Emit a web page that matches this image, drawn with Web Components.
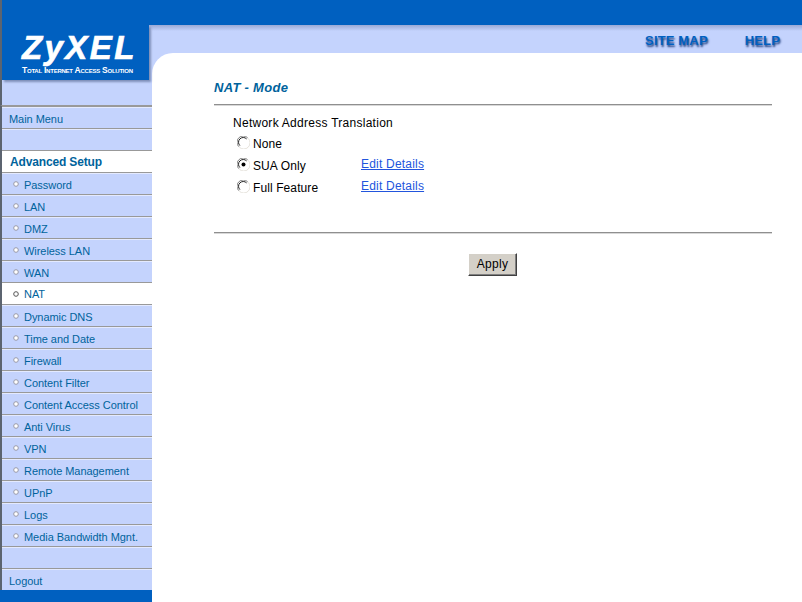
<!DOCTYPE html>
<html>
<head>
<title>NAT - Mode</title>
<style>
  html, body { margin: 0; padding: 0; height: 100%; overflow: hidden; background: #fff; }
  body { font-family: "Liberation Sans", Arial, sans-serif; }
</style>
</head>
<body>

<template id="zx-logo">
  <style>
    :host {
      display: block; height: 83px; position: relative;
      background: linear-gradient(#0060c0 25px, #9aa9d6 25px, #c4d3fd 30px);
      border-left: 2px solid #5c6470; box-sizing: border-box;
    }
    /* the drop shadow starts under the top bar */
    #shade { position: absolute; left: 0; top: 25px; height: 55px; width: 147px; box-shadow: 2px 2px 2px #7f8fb8; }
    #box {
      position: relative; height: 80px; width: 147px; box-sizing: border-box;
      background: #0060c0; color: #fff; padding: 32px 0 0 20px;
    }
    #name {
      font: italic bold 33px/32px "Liberation Sans", sans-serif; letter-spacing: 2.4px; height: 32px;
      -webkit-text-stroke: .7px #fff;
    }
    #slogan {
      font: bold 8.5px/10px "Liberation Sans", sans-serif; font-variant: small-caps;
      white-space: nowrap; margin-top: 1px; letter-spacing: -.24px;
    }
  </style>
  <div id="shade"></div>
  <div id="box">
    <div id="name">ZyXEL</div>
    <div id="slogan">Total Internet Access Solution</div>
  </div>
</template>

<template id="zx-nav-item">
  <style>
    :host {
      display: flex; align-items: center; box-sizing: border-box; height: 22px;
      border-top: 1px solid #999; box-shadow: inset 0 1px 0 #e4eaff;
      background: #c4d3fd; color: #00639c;
      font: 11px "Liberation Sans", sans-serif; padding: 2px 0 0 7px; white-space: nowrap;
      letter-spacing: -.05px;
    }
    :host([active]) { background: #fff; box-shadow: none; padding-top: 0; }
    :host([heading]) { font-weight: bold; font-size: 12px; padding-left: 8px; letter-spacing: -.15px; }
    :host([sub]) { padding-left: 11px; }
    svg { display: none; width: 6px; height: 6px; margin-right: 5px; position: relative; top: -1px; }
    :host([sub]) svg { display: block; }
    :host([active]) svg { top: 0; }
    circle { fill: #fff; stroke: #9a9aa8; }
    :host([active]) circle { stroke: #555; }
  </style>
  <svg viewBox="0 0 6 6"><circle cx="3" cy="3" r="2.3"/></svg>
  <slot></slot>
</template>

<template id="zx-sidebar">
  <style>
    :host {
      display: flex; flex-direction: column; width: 152px; flex: none;
      background: #c4d3fd; position: relative; z-index: 1;
    }
    #spacer { height: 23px; box-sizing: border-box; border-left: 2px solid #5c6470; border-bottom: 1px solid #999; }
    #list { border-left: 2px solid #5c6470; }
    #foot { flex: 1; background: #0060c0; }
  </style>
  <zx-logo></zx-logo>
  <div id="spacer"></div>
  <div id="list"><slot></slot></div>
  <div id="foot"></div>
</template>

<template id="zx-topbar">
  <style>
    :host { display: block; background: #0060c0; padding-top: 25px; }
    #band {
      height: 28px; box-sizing: border-box; padding: 9px 22px 0 0;
      background: linear-gradient(#9aa9d6, #c4d3fd 6px);
      display: flex; justify-content: flex-end; gap: 37px;
    }
    ::slotted(span) {
      font: bold 13px/14px "Liberation Sans", sans-serif; color: #0060c0;
      letter-spacing: .15px;
      text-shadow: 1px 2px 2px #1f3f7f;
    }
  </style>
  <div id="band"><slot></slot></div>
</template>

<template id="zx-radio">
  <style>
    :host {
      display: flex; align-items: center; height: 22px; gap: 3px; margin-left: 4px;
      font: 12px "Liberation Sans", sans-serif; color: #000; letter-spacing: .1px;
    }
    svg { width: 13px; height: 13px; flex: none; position: relative; top: -2px; }
    #dot { display: none; }
    :host([checked]) #dot { display: block; }
    #label { width: 105px; }
    ::slotted(a) { color: #2255dd; font-size: 12px; letter-spacing: .2px; position: relative; top: -2px; }
  </style>
  <svg viewBox="0 0 13 13">
    <circle cx="6.5" cy="6.5" r="6" fill="#fff"/>
    <path d="M1.8 10.7A6 6 0 0 1 10.7 1.8" fill="none" stroke="#808080"/>
    <path d="M2.9 9.6A4.6 4.6 0 0 1 9.6 2.9" fill="none" stroke="#222"/>
    <path d="M11.2 2.3A6 6 0 0 1 2.3 11.2" fill="none" stroke="#e4e1da"/>
    <circle id="dot" cx="6.5" cy="6.5" r="2" fill="#000"/>
  </svg>
  <span id="label"></span>
  <slot></slot>
</template>

<template id="zx-button">
  <style>
    :host {
      display: inline-block; box-sizing: border-box; width: 49px; height: 23px;
      background: #d4d0c8; color: #000; font: 12px/21px "Liberation Sans", sans-serif; text-align: center;
      letter-spacing: .3px;
      border: 1px solid; border-color: #fff #404040 #404040 #fff;
      box-shadow: inset -1px -1px 0 #808080;
    }
  </style>
  <slot></slot>
</template>

<template id="zx-content">
  <style>
    :host { display: block; flex: 1; background: #c4d3fd; }
    #panel {
      background: #fff; border-top-left-radius: 21px; height: 100%; box-sizing: border-box;
      padding: 27px 30px 0 62px;
    }
    h1 { margin: 0; height: 24px; font: italic bold 13px/15px "Liberation Sans", sans-serif; color: #00639c; letter-spacing: .3px; }
    hr { margin: 0; height: 2px; border: 0; background: linear-gradient(#8f8f8f 1px, #d8d8d8 1px); }
    #form { padding: 10px 0 0 19px; height: 126px; box-sizing: border-box; font: 12px "Liberation Sans", sans-serif; color: #000; }
    #title { height: 14px; line-height: 14px; letter-spacing: .27px; }
    #opts { margin-top: 3px; }
    #actions { display: flex; justify-content: center; padding-top: 19px; padding-right: 1px; }
  </style>
  <div id="panel">
    <h1><slot name="heading"></slot></h1>
    <hr>
    <div id="form"><div id="title"><slot name="title"></slot></div><div id="opts"><slot></slot></div></div>
    <hr>
    <div id="actions"><slot name="actions"></slot></div>
  </div>
</template>

<template id="zx-app">
  <style>
    :host { display: flex; width: 802px; height: 602px; overflow: hidden; }
    #main { flex: 1; display: flex; flex-direction: column; min-width: 0; }
  </style>
  <slot name="sidebar"></slot>
  <div id="main"><slot name="top"></slot><slot name="content"></slot></div>
</template>

<script>
  function reg(name, extra){
    class El extends HTMLElement {
      constructor(){
        super();
        const root = this.attachShadow({ mode: "open" });
        root.appendChild(document.getElementById(name).content.cloneNode(true));
      }
      connectedCallback(){ if(extra){ extra(this); } }
    }
    customElements.define(name, El);
  }
  ["zx-logo","zx-nav-item","zx-sidebar","zx-topbar","zx-button","zx-content","zx-app"].forEach(n => reg(n));
  reg("zx-radio", el => { el.shadowRoot.getElementById("label").textContent = el.getAttribute("label"); });
</script>

<zx-app>
  <zx-sidebar slot="sidebar">
    <zx-nav-item>Main Menu</zx-nav-item>
    <zx-nav-item></zx-nav-item>
    <zx-nav-item heading active>Advanced Setup</zx-nav-item>
    <zx-nav-item sub>Password</zx-nav-item>
    <zx-nav-item sub>LAN</zx-nav-item>
    <zx-nav-item sub>DMZ</zx-nav-item>
    <zx-nav-item sub>Wireless LAN</zx-nav-item>
    <zx-nav-item sub>WAN</zx-nav-item>
    <zx-nav-item sub active>NAT</zx-nav-item>
    <zx-nav-item sub>Dynamic DNS</zx-nav-item>
    <zx-nav-item sub>Time and Date</zx-nav-item>
    <zx-nav-item sub>Firewall</zx-nav-item>
    <zx-nav-item sub>Content Filter</zx-nav-item>
    <zx-nav-item sub>Content Access Control</zx-nav-item>
    <zx-nav-item sub>Anti Virus</zx-nav-item>
    <zx-nav-item sub>VPN</zx-nav-item>
    <zx-nav-item sub>Remote Management</zx-nav-item>
    <zx-nav-item sub>UPnP</zx-nav-item>
    <zx-nav-item sub>Logs</zx-nav-item>
    <zx-nav-item sub>Media Bandwidth Mgnt.</zx-nav-item>
    <zx-nav-item></zx-nav-item>
    <zx-nav-item>Logout</zx-nav-item>
  </zx-sidebar>
  <zx-topbar slot="top"><span>SITE MAP</span><span>HELP</span></zx-topbar>
  <zx-content slot="content">
    <span slot="heading">NAT - Mode</span>
    <span slot="title">Network Address Translation</span>
    <zx-radio label="None"></zx-radio>
    <zx-radio label="SUA Only" checked><a href="#">Edit Details</a></zx-radio>
    <zx-radio label="Full Feature"><a href="#">Edit Details</a></zx-radio>
    <zx-button slot="actions">Apply</zx-button>
  </zx-content>
</zx-app>

</body>
</html>
